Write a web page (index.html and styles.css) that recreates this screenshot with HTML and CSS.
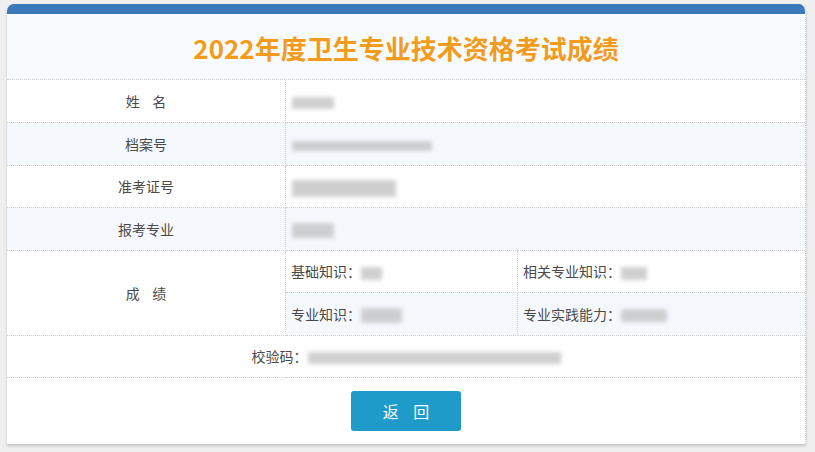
FILE: index.html
```html
<!DOCTYPE html>
<html lang="zh-CN">
<head>
<meta charset="utf-8">
<title>2022年度卫生专业技术资格考试成绩</title>
<link rel="stylesheet" href="styles.css">
</head>
<body>
<div class="page">
  <div class="card">
    <div class="bar"></div>
    <div class="title">2022年度卫生专业技术资格考试成绩</div>
    <table class="grid">
      <tr class="r">
        <td class="lab">姓&nbsp;&nbsp;&nbsp;&nbsp;名</td>
        <td class="val" colspan="2"><span class="blur" style="width:42px;height:12px"></span></td>
      </tr>
      <tr class="r alt">
        <td class="lab">档案号</td>
        <td class="val" colspan="2"><span class="blur" style="width:140px;height:10px"></span></td>
      </tr>
      <tr class="r">
        <td class="lab">准考证号</td>
        <td class="val" colspan="2"><span class="blur" style="width:104px;height:17px"></span></td>
      </tr>
      <tr class="r alt">
        <td class="lab">报考专业</td>
        <td class="val" colspan="2"><span class="blur" style="width:42px;height:15px"></span></td>
      </tr>
      <tr class="r">
        <td class="lab" rowspan="2">成&nbsp;&nbsp;&nbsp;&nbsp;绩</td>
        <td class="sub">基础知识：<span class="blur" style="width:21px;height:13px"></span></td>
        <td class="sub sub2">相关专业知识：<span class="blur" style="width:26px;height:13px"></span></td>
      </tr>
      <tr class="r alt">
        <td class="sub">专业知识：<span class="blur" style="width:41px;height:15px"></span></td>
        <td class="sub sub2">专业实践能力：<span class="blur" style="width:46px;height:13px"></span></td>
      </tr>
      <tr class="r">
        <td class="code" colspan="3">校验码：<span class="blur" style="width:253px;height:12px"></span></td>
      </tr>
      <tr class="btnrow">
        <td colspan="3"><button class="btn" type="button">返&nbsp;&nbsp;&nbsp;&nbsp;回</button></td>
      </tr>
    </table>
  </div>
</div>
</body>
</html>
```

FILE: styles.css
```css
html, body {
  margin: 0;
  padding: 0;
  background: #efefef;
}
body {
  font-family: "Noto Sans CJK SC", "Noto Sans", sans-serif;
  color: #4a4a4a;
}
.page {
  padding: 4px 9px 8px 7px;
}
.card {
  background: #fff;
  border-radius: 7px 7px 0 0;
  border-right: 1px dotted #c9c9c9;
  box-shadow: 0 2px 3px rgba(0, 0, 0, 0.18);
  overflow: hidden;
}
.bar {
  height: 10px;
  background: #3b79bb;
}
.title {
  height: 66px;
  background: #f7fbfe;
  border-bottom: 1px dotted #cfcfcf;
  box-sizing: border-box;
  display: flex;
  align-items: center;
  justify-content: center;
  font-size: 26px;
  font-weight: bold;
  color: #f29b1d;
  padding-top: 2px;
}
.grid {
  width: 100%;
  border-collapse: collapse;
  font-size: 14px;
}
.grid td {
  padding: 0;
  border-bottom: 1px dotted #cfcfcf;
}
.r {
  height: 42.5px;
}
.alt td.val,
.alt td.sub,
.alt.r {
  background: #f5f9fd;
}
.lab {
  width: 278px;
  text-align: center;
  border-right: 1px dotted #cfcfcf;
  background: #fff;
}
.alt .lab {
  background: #f5f9fd;
}
.val {
  padding-left: 6px !important;
  vertical-align: middle;
}
.sub {
  width: 226px;
  padding-left: 5px !important;
  border-right: 1px dotted #cfcfcf;
}
.sub2 {
  border-right: none;
  width: auto;
}
.code {
  text-align: center;
}
.blur {
  display: inline-block;
  vertical-align: middle;
  background: #c4c4c4;
  filter: blur(2px);
  opacity: 0.8;
}
.btnrow td {
  height: 66px;
  text-align: center;
  border-bottom: none;
}
.btn {
  width: 110px;
  height: 40px;
  border: none;
  border-radius: 3px;
  background: #1e9bc8;
  color: #fff;
  font-family: "Noto Sans CJK SC", sans-serif;
  font-size: 16px;
  margin-top: 0;
}
```
